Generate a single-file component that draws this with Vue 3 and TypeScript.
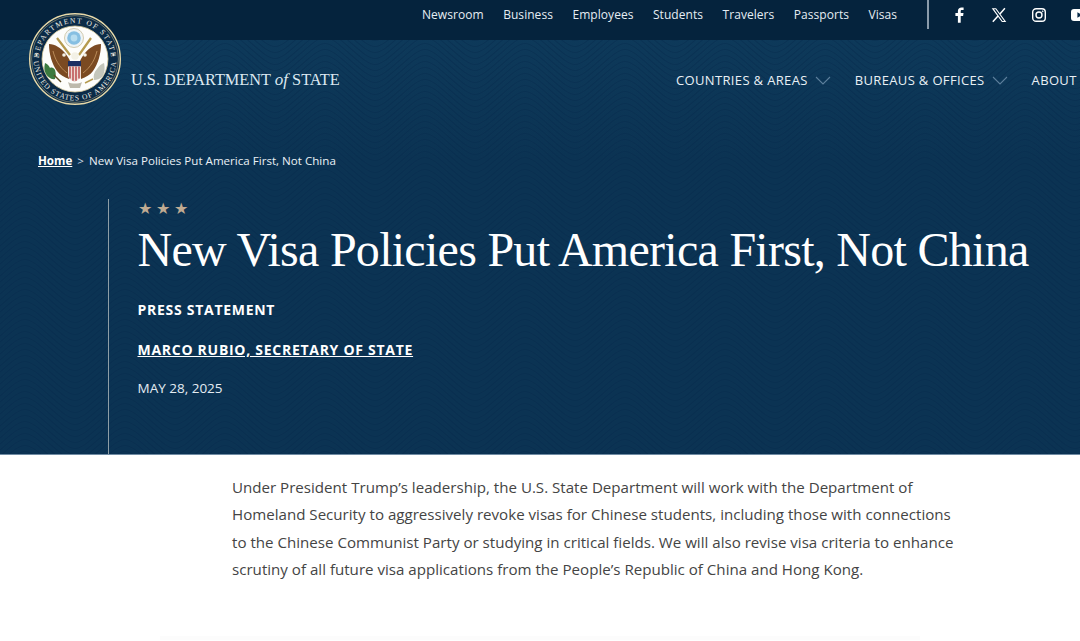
<template>
  <div class="page">
    <header class="hero">
      <svg class="waves" width="1080" height="454" aria-hidden="true">
        <defs>
          <pattern id="wave" width="100" height="60" patternUnits="userSpaceOnUse">
            <path
              v-for="y in waveRows"
              :key="y"
              :d="`M0 ${y} C25 ${y - 22} 25 ${y - 22} 50 ${y} S75 ${y + 22} 100 ${y}`"
              fill="none"
              stroke="#06294a"
              stroke-width="1.2"
              opacity="0.4"
            />
          </pattern>
        </defs>
        <rect width="1080" height="454" fill="url(#wave)" />
      </svg>

      <div class="topbar">
        <a v-for="link in topLinks" :key="link" class="top-link">{{ link }}</a>
        <span class="divider"></span>
        <div class="socials">
          <svg width="16" height="16" viewBox="0 0 16 16">
            <path fill="#fff" d="M9.7 15.8V8.9h2.4l.4-2.8H9.7V4.400c0-.8.3-1.3 1.4-1.3h1.500V.6C12.200.5 11.400.4 10.500.4 8.400.4 6.900 1.700 6.900 4v2.100H4.400v2.800h2.500v6.900z" />
          </svg>
          <svg width="16" height="16" viewBox="0 0 16 16">
            <path fill="none" stroke="#fff" stroke-width="1.1" d="M1.8 1.7h3l9.400 12.800h-3z" />
            <path fill="none" stroke="#fff" stroke-width="1.5" d="M13.900 1.300 8.900 7M7 9.100l-5.200 5.700" />
          </svg>
          <svg width="16" height="16" viewBox="0 0 16 16" fill="none" stroke="#fff" stroke-width="1.4">
            <rect x="1.7" y="1.7" width="12.6" height="12.6" rx="3.4" />
            <circle cx="8" cy="8" r="3" />
            <circle cx="11.7" cy="4.3" r="0.5" fill="#fff" stroke-width="0.6" />
          </svg>
          <svg width="16" height="12" viewBox="0 0 16 12">
            <rect width="16" height="12" rx="3" fill="#fff" />
            <path d="M6.4 3.3v5.4L11 6z" fill="#0a2c4a" />
          </svg>
        </div>
      </div>

      <div class="mainbar">
        <div class="wordmark">U.S. DEPARTMENT <em>of</em> STATE</div>
        <nav class="mainnav">
          <a v-for="item in navItems" :key="item.label" class="nav-item">
            {{ item.label }}
            <svg v-if="item.caret" width="16" height="9" viewBox="0 0 16 9">
              <path d="M1 1l7 7 7-7" fill="none" stroke="#5d7f9c" stroke-width="1.1" />
            </svg>
          </a>
        </nav>
      </div>

      <svg class="seal" width="92" height="92" viewBox="0 0 92 92">
        <defs>
          <path id="arcTop" d="M10 46a36 36 0 0 1 72 0" />
          <path id="arcBottom" d="M4.6 46a41.4 41.4 0 0 0 82.800 0" />
        </defs>
        <circle cx="46" cy="46" r="45.3" fill="#0b2b47" stroke="#e8d9a8" stroke-width="1.4" />
        <circle cx="46" cy="46" r="43.4" fill="#0b2b47" stroke="#c9b88a" stroke-width="0.5" />
        <circle cx="46" cy="46" r="33" fill="#fdfdfb" stroke="#d8c998" stroke-width="0.8" />
        <text class="seal-text seal-top"><textPath href="#arcTop" startOffset="50%" text-anchor="middle">DEPARTMENT OF STATE</textPath></text>
        <text class="seal-text seal-bottom"><textPath href="#arcBottom" startOffset="50%" text-anchor="middle">UNITED STATES OF AMERICA</textPath></text>
        <circle cx="7.5" cy="42" r="1.2" fill="#e8e4d6" />
        <circle cx="84.5" cy="42" r="1.2" fill="#e8e4d6" />
        <!-- crest -->
        <circle cx="45" cy="25" r="9.5" fill="#eef4f6" stroke="#c3b78f" stroke-width="0.7" />
        <circle cx="45" cy="25" r="6.8" fill="#86bfe2" />
        <circle cx="45" cy="25" r="3.4" fill="#b6dcef" />
        <path d="M28 25l13 17M62 25L50 42" stroke="#b59a4e" stroke-width="2.2" />
        <!-- wings -->
        <path d="M20 31c6 0 12 4 16 9 2 3 4 5 5 8l-1 18c-5-2-9-4-12-8-5-7-8-17-8-27z" fill="#7b4a22" />
        <path d="M72 31c-6 0-12 4-16 9-2 3-4 5-5 8l1 18c5-2 9-4 12-8 5-7 8-17 8-27z" fill="#7b4a22" />
        <path d="M24 38c2 8 6 16 14 22M68 38c-2 8-6 16-14 22" stroke="#b98a58" stroke-width="1" fill="none" />
        <circle cx="46" cy="43" r="3.8" fill="#f3f1e6" />
        <circle cx="35" cy="42" r="1.8" fill="#f3f1e6" />
        <circle cx="56" cy="42" r="1.8" fill="#f3f1e6" />
        <!-- shield -->
        <rect x="39" y="48" width="13" height="5.5" fill="#1c2f63" />
        <path d="M39 53.5h13v9c0 3-3.5 5-6.5 6.5-3-1.5-6.5-3.5-6.5-6.5z" fill="#ecdcd4" />
        <path d="M41 53.5v12M44 53.5v14.3M47 53.5v14.3M50 53.5v12" stroke="#b5393c" stroke-width="1.3" />
        <!-- olive, arrows, tail -->
        <path d="M16 50c3 1 4 3 5 5 2-1 4 0 5 2 1 3 1 6 0 9-4 1-7-2-9-5-2-3-2-7-1-11z" fill="#3b7a3f" />
        <path d="M25 62l7 7" stroke="#5a4a20" stroke-width="1.4" />
        <path d="M75 50c1 5 1 10-2 14-2 2-5 3-8 3-1-4 0-8 3-11 2-3 4-5 7-6z" fill="#c4c6bb" />
        <path d="M64 66l-8 4" stroke="#b59a4e" stroke-width="1.4" />
        <path d="M39 69c3 2 11 2 14 0l-2 6h-10z" fill="#bdb9ab" />
      </svg>

      <div class="crumbs">
        <a class="crumb-home">Home</a>
        <span class="crumb-sep">&gt;</span>
        <span>New Visa Policies Put America First, Not China</span>
      </div>

      <div class="headline">
        <div class="stars">★ ★ ★</div>
        <h1>New Visa Policies Put America First, Not China</h1>
        <div class="label">PRESS STATEMENT</div>
        <a class="author">MARCO RUBIO, SECRETARY OF STATE</a>
        <div class="date">MAY 28, 2025</div>
      </div>
    </header>

    <main class="content">
      <p>
        Under President Trump’s leadership, the U.S. State Department will work with the Department of
        Homeland Security to aggressively revoke visas for Chinese students, including those with connections
        to the Chinese Communist Party or studying in critical fields. We will also revise visa criteria to enhance
        scrutiny of all future visa applications from the People’s Republic of China and Hong Kong.
      </p>
      <div class="fade-rule"></div>
    </main>
  </div>
</template>

<script setup lang="ts">
interface NavItem {
  label: string;
  caret: boolean;
}

const topLinks: string[] = [
  "Newsroom",
  "Business",
  "Employees",
  "Students",
  "Travelers",
  "Passports",
  "Visas",
];

const navItems: NavItem[] = [
  { label: "COUNTRIES & AREAS", caret: true },
  { label: "BUREAUS & OFFICES", caret: true },
  { label: "ABOUT", caret: false },
];

// extra rows above and below so the curves tile without a seam
const waveRows: number[] = Array.from({ length: 17 }, (_, i) => i * 6 - 18);
</script>

<style>
html,
body {
  margin: 0;
  background: #fff;
}
</style>

<style scoped>
.page {
  width: 1080px;
  height: 641px;
  overflow: hidden;
  font-family: "Open Sans", sans-serif;
  background: #fff;
}

.hero {
  position: relative;
  height: 454px;
  background: linear-gradient(#0e3b5c 0, #0b3353 160px, #0b3353 100%);
  border-bottom: 1px solid #6f8ba3;
  color: #fff;
  overflow: hidden;
}

.waves {
  position: absolute;
  left: 0;
  top: 0;
}

.topbar {
  position: relative;
  box-sizing: border-box;
  width: max-content;
  height: 40px;
  display: flex;
  align-items: center;
  gap: 19.5px;
  padding: 0 0 11px 422px;
  font-size: 12px;
  white-space: nowrap;
}

.topbar::before {
  content: "";
  position: absolute;
  left: 0;
  top: 0;
  width: 1080px;
  height: 40px;
  background: #05233d;
}

.top-link {
  position: relative;
  color: #e6edf3;
  letter-spacing: 0.05px;
}

.divider {
  position: relative;
  flex: none;
  width: 2px;
  height: 29px;
  margin-left: 10px;
  background: #8a9bab;
}

.socials {
  position: relative;
  flex: none;
  display: flex;
  align-items: center;
  gap: 24px;
  margin-left: 2.5px;
}

.socials svg {
  flex: none;
}

.mainbar {
  position: relative;
  width: max-content;
  height: 80px;
  display: flex;
  align-items: center;
  padding-left: 131px;
  white-space: nowrap;
}

.wordmark {
  flex: none;
  width: 545px;
  font-family: "Liberation Serif", serif;
  font-size: 16.3px;
  color: #dbe8f1;
}

.wordmark em {
  font-size: 17px;
}

.mainnav {
  display: flex;
  align-items: center;
  gap: 24px;
  font-size: 13px;
  font-weight: 500;
  letter-spacing: 0.35px;
  color: #e9f0f5;
}

.nav-item {
  display: flex;
  align-items: center;
  gap: 7px;
}

.nav-item svg {
  flex: none;
}

.seal {
  position: absolute;
  left: 29px;
  top: 13px;
}

.seal-text {
  font-family: "Liberation Serif", serif;
  font-size: 7.5px;
  fill: #f1efe4;
}

.seal-top {
  letter-spacing: 1.4px;
}

.seal-bottom {
  letter-spacing: 0.9px;
}

.crumbs {
  position: relative;
  display: flex;
  gap: 5px;
  padding: 33px 0 0 38px;
  font-size: 11.6px;
  line-height: 16px;
  color: #e9f0f5;
}

.crumb-home {
  font-weight: 700;
  text-decoration: underline;
  color: #fff;
}

.crumb-sep {
  color: #cfdbe5;
}

.headline {
  position: relative;
  margin: 30px 0 0 108px;
  height: 255px;
  padding-left: 28.5px;
  border-left: 1px solid #8e9ea6;
  white-space: nowrap;
}

.stars {
  height: 18px;
  font-size: 16px;
  line-height: 18px;
  color: #c0ab92;
}

h1 {
  margin: 2px 0 0;
  font-family: "Liberation Serif", serif;
  font-weight: 400;
  font-size: 48px;
  line-height: 62px;
  letter-spacing: -0.72px;
  color: #fff;
}

.label,
.author {
  display: block;
  font-size: 14px;
  font-weight: 700;
  line-height: 20px;
  letter-spacing: 0.72px;
}

.label {
  margin-top: 19px;
}

.author {
  margin-top: 20px;
  text-decoration: underline;
}

.date {
  margin-top: 18px;
  font-size: 13.5px;
  line-height: 20px;
  color: #e4ecf2;
}

.content {
  padding: 19px 0 0 232px;
}

.content p {
  margin: 0;
  width: 730px;
  font-size: 15.12px;
  line-height: 27.3px;
  color: #444;
}

.fade-rule {
  height: 4px;
  margin: 53px 0 0 -72px;
  width: 760px;
  background: #fcfcfc;
}
</style>
